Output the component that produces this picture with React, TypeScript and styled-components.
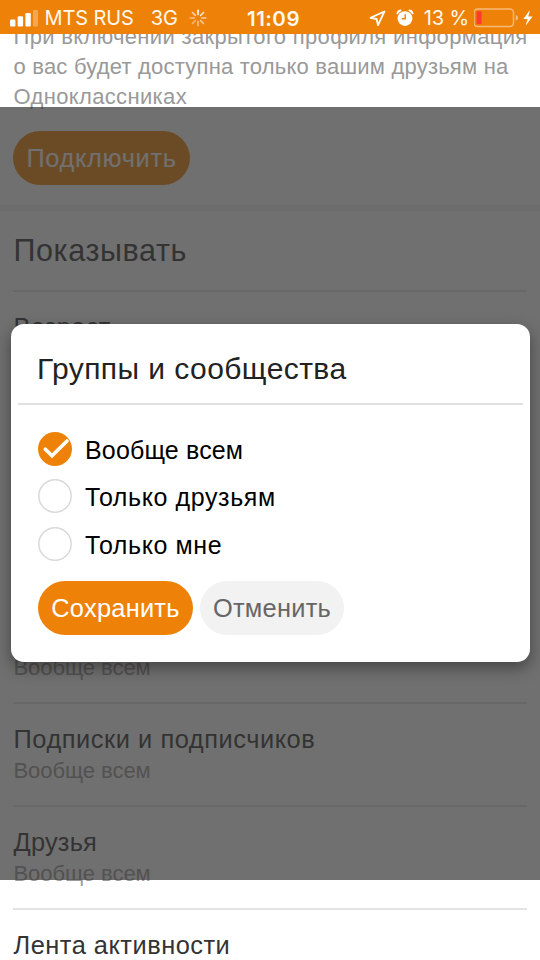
import React from "react";
import styled, { createGlobalStyle } from "styled-components";

const GlobalStyle = createGlobalStyle`
  * { box-sizing: border-box; }
  body { margin: 0; background: #fff; font-family: "Liberation Sans", Arial, sans-serif; }
  button { font-family: inherit; }
`;

const Screen = styled.div`
  position: relative;
  width: 540px;
  height: 960px;
  overflow: hidden;
  background: #fff;
  white-space: nowrap;
`;

const StatusBar = styled.header`
  position: relative;
  z-index: 3;
  display: grid;
  grid-template-columns: 1fr auto 1fr;
  align-items: center;
  height: 34px;
  padding: 0 6px 0 10px;
  background: #ee8208;
  color: #fff8ec;
  font-family: Inter, Roboto, sans-serif;
  font-size: 20px;
  line-height: 35px;
`;

const StatusGroup = styled.div<{ $end?: boolean }>`
  display: flex;
  align-items: center;
  justify-content: ${(p) => (p.$end ? "flex-end" : "flex-start")};
  height: 34px;
`;

const StatusText = styled.span<{ $gap: number; $track: number }>`
  margin-left: ${(p) => p.$gap}px;
  padding-top: 1px;
  letter-spacing: ${(p) => p.$track}px;
`;

const Clock = styled.time`
  padding: 1px 0 0 3px;
  font-weight: 600;
  font-size: 20.5px;
  letter-spacing: 0.5px;
`;

const StatusIcon = styled.svg<{ $gap: number }>`
  flex: none;
  margin-left: ${(p) => p.$gap}px;
`;

const Content = styled.main`
  display: flex;
  flex-direction: column;
  margin-top: -12.5px;
`;

const Intro = styled.section`
  height: 183.5px;
  padding: 0 13px;
`;

const IntroText = styled.p`
  margin: 0;
  padding-left: 0.5px;
  color: #999;
  font-size: 22px;
  line-height: 30px;
`;

const Line = styled.span<{ $track: number }>`
  display: block;
  letter-spacing: ${(p) => p.$track}px;
`;

const Button = styled.button<{ $kind: "primary" | "plain"; $width: number; $track: number }>`
  width: ${(p) => p.$width}px;
  height: 54px;
  padding: 0;
  border: 0;
  border-radius: 27px;
  background: ${(p) => (p.$kind === "primary" ? "#ee8208" : "#f2f2f2")};
  color: ${(p) => (p.$kind === "primary" ? "#fff" : "#666")};
  font-size: 25.4px;
  line-height: 52px;
  letter-spacing: ${(p) => p.$track}px;
`;

const ConnectRow = styled.div`
  display: flex;
  margin-top: 19.5px;
`;

const Band = styled.div`
  height: 6px;
  background: #f0f0f0;
`;

const Heading = styled.h1`
  height: 79px;
  margin: 0 13px;
  padding-left: 0.5px;
  color: #333;
  font-size: 30.5px;
  font-weight: 400;
  line-height: 79px;
  letter-spacing: 0.6px;
`;

const Row = styled.div`
  height: 103px;
  margin: 0 13px;
  padding: 20px 0 0 0.5px;
  border-top: 2px solid #e3e3e3;
`;

const RowTitle = styled.div<{ $track: number }>`
  color: #333;
  font-size: 25.4px;
  line-height: 31px;
  letter-spacing: ${(p) => p.$track}px;
`;

const RowValue = styled.div`
  color: #999;
  font-size: 22px;
  line-height: 32px;
  letter-spacing: -0.05px;
`;

const Overlay = styled.div`
  position: absolute;
  z-index: 1;
  top: 107px;
  left: 0;
  width: 540px;
  height: 772.5px;
  background: rgba(51, 51, 51, 0.7);
`;

const Dialog = styled.section`
  position: absolute;
  z-index: 2;
  top: 323.5px;
  left: 11px;
  width: 519px;
  height: 338px;
  padding: 0 7px;
  border-radius: 13px;
  background: #fff;
  box-shadow: 0 6px 16px rgba(0, 0, 0, 0.4);
`;

const DialogTitle = styled.h2`
  height: 81.5px;
  margin: 0 0 20px;
  padding: 5px 0 0 19px;
  border-bottom: 2px solid #e1e1e1;
  color: #222;
  font-size: 30px;
  font-weight: 400;
  line-height: 80px;
  letter-spacing: 0.43px;
`;

const Options = styled.div`
  display: flex;
  flex-direction: column;
  padding-left: 20px;
`;

const Option = styled.label`
  display: flex;
  align-items: center;
  gap: 13px;
  height: 47.5px;
  color: #000;
  font-size: 25px;
`;

const OptionText = styled.span<{ $track: number }>`
  padding-top: 2px;
  line-height: 30px;
  letter-spacing: ${(p) => p.$track}px;
`;

const Actions = styled.div`
  display: flex;
  gap: 7px;
  margin-top: 13.5px;
  padding-left: 20px;
`;

const rows = [
  { title: "Возраст", value: "Вообще всем", track: 0.3 },
  { title: "Личные данные", value: "Вообще всем", track: 0.4 },
  { title: "Город", value: "Вообще всем", track: 0.4 },
  { title: "Группы и сообщества", value: "Вообще всем", track: 0.4 },
  { title: "Подписки и подписчиков", value: "Вообще всем", track: 0.55 },
  { title: "Друзья", value: "Вообще всем", track: 0.2 },
  { title: "Лента активности", track: 0.5 },
];

const options = [
  { label: "Вообще всем", track: 0.15 },
  { label: "Только друзьям", track: 0.6 },
  { label: "Только мне", track: 0.6 },
];

const spokes = [0.5, 0.45, 0.5, 0.7, 1, 0.8, 0.6, 0.6];

function Radio({ checked }: { checked: boolean }) {
  return (
    <svg width="34" height="34" viewBox="0 0 34 34">
      {checked ? (
        <>
          <circle cx="17" cy="17" r="17" fill="#ee8208" />
          <path d="M7.3 17.2 L14 23.8 L29 9" fill="none" stroke="#fff" strokeWidth="3.6" strokeLinecap="round" />
        </>
      ) : (
        <circle cx="17" cy="17" r="16.2" fill="#fff" stroke="#d9d9d9" strokeWidth="1.5" />
      )}
    </svg>
  );
}

export default function App() {
  const [selected, setSelected] = React.useState(0);
  return (
    <Screen>
      <GlobalStyle />
      <StatusBar>
        <StatusGroup>
          <StatusIcon $gap={0} width="28" height="18" viewBox="0 0 28 18" fill="#fff">
            <rect x="0" y="10.5" width="5.4" height="7" rx="1.2" />
            <rect x="7.7" y="7.2" width="5.4" height="10.3" rx="1.2" />
            <rect x="15.4" y="4" width="5.4" height="13.5" rx="1.2" />
            <rect x="23" y="1" width="5" height="16.5" rx="1.2" opacity="0.3" />
          </StatusIcon>
          <StatusText $gap={6.5} $track={-0.1}>MTS RUS</StatusText>
          <StatusText $gap={17} $track={-0.1}>3G</StatusText>
          <StatusIcon $gap={11} width="18" height="18" viewBox="-9 -9 18 18" stroke="#fff" strokeWidth="1.6" strokeLinecap="round">
            {spokes.map((o, i) => (
              <line key={i} x1="0" y1="3.6" x2="0" y2="7.8" opacity={o} transform={`rotate(${i * 45})`} />
            ))}
          </StatusIcon>
        </StatusGroup>
        <Clock>11:09</Clock>
        <StatusGroup $end>
          <StatusIcon $gap={0} width="17" height="17" viewBox="0 0 17 17" fill="none" stroke="#fff" strokeWidth="1.8" strokeLinejoin="round">
            <path d="M15.4 1.5 L1.5 7.8 L7.6 9 L9 15.2 Z" />
          </StatusIcon>
          <StatusIcon $gap={9.5} width="18" height="18" viewBox="0 0 18 18">
            <circle cx="9" cy="9.6" r="7.4" fill="#fff" />
            <path d="M1.4 4.2 A4 4 0 0 1 4.5 1.5 M16.6 4.2 A4 4 0 0 0 13.5 1.5" fill="none" stroke="#fff" strokeWidth="2" strokeLinecap="round" />
            <path d="M9.2 5.2 V9.8 H5.8" fill="none" stroke="#ee8208" strokeWidth="1.4" />
          </StatusIcon>
          <StatusText $gap={10} $track={-0.1}>13 %</StatusText>
          <StatusIcon $gap={5} width="60" height="20" viewBox="0 0 60 20">
            <rect x="0" y="1" width="39.5" height="17.5" rx="3.5" fill="none" stroke="#fff" strokeOpacity="0.45" strokeWidth="1.5" />
            <path d="M41.8 7 Q44 7.4 44 9.8 Q44 12.2 41.8 12.6 Z" fill="#fff" fillOpacity="0.5" />
            <rect x="2.6" y="3.3" width="5" height="13" rx="1.2" fill="#ff3b30" />
            <path d="M56 2 L49.3 11 H53.6 L51.6 17.8 L58.6 8.5 H54.2 Z" fill="#fff" />
          </StatusIcon>
        </StatusGroup>
      </StatusBar>

      <Content>
        <Intro>
          <IntroText>
            <Line $track={0.33}>При включении закрытого профиля информация</Line>
            <Line $track={0.21}>о вас будет доступна только вашим друзьям на</Line>
            <Line $track={0.35}>Одноклассниках</Line>
          </IntroText>
          <ConnectRow>
            <Button $kind="primary" $width={177} $track={0.65}>Подключить</Button>
          </ConnectRow>
        </Intro>
        <Band />
        <Heading>Показывать</Heading>
        {rows.map((r) => (
          <Row key={r.title}>
            <RowTitle $track={r.track}>{r.title}</RowTitle>
            {r.value && <RowValue>{r.value}</RowValue>}
          </Row>
        ))}
      </Content>

      <Overlay />

      <Dialog role="dialog" aria-modal="true">
        <DialogTitle>Группы и сообщества</DialogTitle>
        <Options>
          {options.map((o, i) => (
            <Option key={o.label} onClick={() => setSelected(i)}>
              <Radio checked={i === selected} />
              <OptionText $track={o.track}>{o.label}</OptionText>
            </Option>
          ))}
        </Options>
        <Actions>
          <Button $kind="primary" $width={155} $track={0.25}>Сохранить</Button>
          <Button $kind="plain" $width={144} $track={0.25}>Отменить</Button>
        </Actions>
      </Dialog>
    </Screen>
  );
}
